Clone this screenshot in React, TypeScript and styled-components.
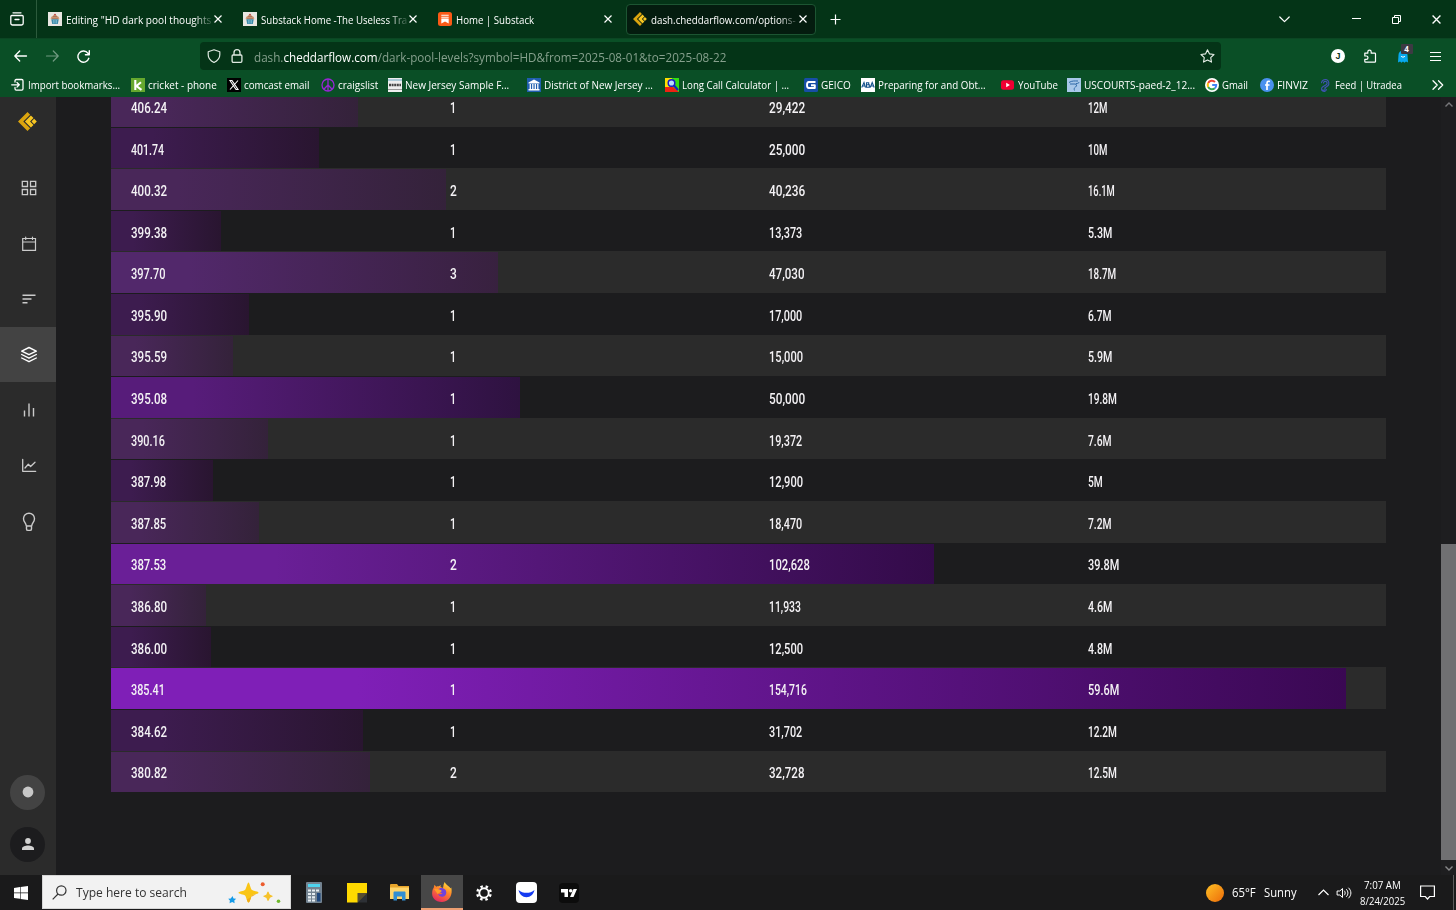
import React, { useLayoutEffect, useRef, useState } from "react";
import styled, { createGlobalStyle } from "styled-components";

const Global = createGlobalStyle`
  * { box-sizing: border-box; }
  html, body { margin: 0; padding: 0; background: #1c1c1e; overflow: hidden; }
  body { font-family: "Open Sans", "Noto Sans", sans-serif; color: #fff; }
  svg { display: block; flex: none; overflow: visible; }
`;

/* Text condensed or widened to a given width */
const FitBox = styled.span<{ $w: number }>`
  display: block;
  flex: none;
  width: ${(p) => p.$w}px;
  white-space: pre;
`;
const FitText = styled.span`
  display: inline-block;
  transform-origin: 0 50%;
`;
function Fit({ w, children }: { w: number; children: React.ReactNode }) {
  const ref = useRef<HTMLSpanElement>(null);
  const [scale, setScale] = useState(1);
  useLayoutEffect(() => {
    if (ref.current) setScale(w / ref.current.offsetWidth);
  }, [w]);
  return (
    <FitBox $w={w}>
      <FitText ref={ref} style={{ transform: `scaleX(${scale})` }}>{children}</FitText>
    </FitBox>
  );
}

const Screen = styled.div`
  width: 1456px;
  height: 910px;
  display: flex;
  flex-direction: column;
  overflow: hidden;
`;

/* ---------- tab strip ---------- */
const TabStrip = styled.div`
  height: 38px;
  background: #043417;
  display: flex;
  align-items: center;
  flex: none;
`;
const FirefoxView = styled.div`
  width: 37px;
  height: 38px;
  border-right: 1px solid #2c5a3c;
  display: flex;
  align-items: center;
  padding-left: 10px;
  margin-right: 4px;
`;
const Tab = styled.div<{ $active?: boolean }>`
  width: 190px;
  height: 31px;
  margin-right: 5px;
  border-radius: 4px;
  display: flex;
  align-items: center;
  padding-left: 6px;
  border: 1px solid ${(p) => (p.$active ? "#1c5532" : "transparent")};
  background: ${(p) => (p.$active ? "#041c0f" : "transparent")};
  font-size: 11.2px;
`;
const TabTitle = styled.div<{ $fade?: boolean }>`
  width: 146px;
  margin-left: 3.5px;
  line-height: 20px;
  padding-top: 1px;
  ${(p) => p.$fade && "mask-image: linear-gradient(90deg, #000 128px, rgba(0,0,0,.2) 145px);"}
`;
const CloseBox = styled.span`
  width: 14px;
  display: flex;
  justify-content: center;
  margin-left: -0.5px;
`;
const WindowButtons = styled.div`
  display: flex;
  margin-left: auto;
`;
const WinButton = styled.div<{ $w: number }>`
  width: ${(p) => p.$w}px;
  height: 38px;
  display: flex;
  align-items: center;
  justify-content: center;
`;

/* ---------- navigation bar ---------- */
const NavBar = styled.div`
  height: 35px;
  background: #0a4f26;
  border-top: 1px solid #0b4623;
  display: flex;
  align-items: center;
  flex: none;
`;
const NavButton = styled.div<{ $w: number; $dim?: boolean }>`
  width: ${(p) => p.$w}px;
  display: flex;
  justify-content: center;
  opacity: ${(p) => (p.$dim ? 0.42 : 1)};
`;
const NavLeft = styled.div`
  display: flex;
  width: 200px;
  padding-left: 4.5px;
`;
const AddressBar = styled.div`
  width: 1021px;
  height: 28px;
  border-radius: 4px;
  background: #043417;
  display: flex;
  align-items: center;
  padding-left: 7px;
  font-size: 11.9px;
  color: #86a08d;
  gap: 9.3px;
  line-height: 18px;
`;
const Address = styled.div`
  padding-top: 1px;
`;
const Host = styled.span`
  color: #fff;
`;
const StarSlot = styled.div`
  margin: 0 6px 0 auto;
`;
const Extensions = styled.div`
  display: flex;
  align-items: center;
  margin-left: auto;
  padding-right: 5px;
`;
const Avatar = styled.div`
  width: 14px;
  height: 14px;
  border-radius: 50%;
  background: #fff;
  color: #0b3219;
  font: 700 9px/14px "Liberation Sans", sans-serif;
  text-align: center;
`;
const GhostWrap = styled.div`
  position: relative;
`;
const Count = styled.span`
  position: absolute;
  left: 4px;
  top: -6px;
  width: 12px;
  height: 10px;
  border-radius: 1px;
  background: #3d3a43;
  font-size: 8px;
  font-weight: 700;
  line-height: 10px;
  text-align: center;
`;

/* ---------- bookmarks ---------- */
const Bookmarks = styled.div`
  height: 24px;
  background: #0a4f26;
  display: flex;
  align-items: center;
  padding-left: 10.5px;
  flex: none;
  font-size: 10.7px;
  line-height: 18px;
`;
const Bookmark = styled.div<{ $slot: number }>`
  width: ${(p) => p.$slot}px;
  display: flex;
  align-items: center;
  gap: 3px;
  flex: none;
`;

/* ---------- page ---------- */
const Page = styled.div`
  height: 778px;
  display: flex;
  background: #1c1c1e;
  flex: none;
`;
const Sidebar = styled.nav`
  width: 55.5px;
  background: #2b2b2b;
  display: flex;
  flex-direction: column;
  align-items: center;
  padding-bottom: 13.5px;
`;
const LogoSlot = styled.div`
  height: 63px;
  padding-top: 15px;
`;
const SideItem = styled.div<{ $active?: boolean }>`
  width: 100%;
  height: 55.55px;
  display: flex;
  align-items: center;
  justify-content: center;
  padding: 1px 0 0 2px;
  color: ${(p) => (p.$active ? "#fff" : "#cbcbcb")};
  background: ${(p) => (p.$active ? "#434343" : "transparent")};
`;
const Round = styled.div<{ $bg: string }>`
  width: 35px;
  height: 35px;
  border-radius: 50%;
  background: ${(p) => p.$bg};
  display: flex;
  align-items: center;
  justify-content: center;
`;
const Bottom = styled.div`
  margin-top: auto;
  display: flex;
  flex-direction: column;
  gap: 17px;
`;
const Main = styled.main`
  width: 1385.5px;
  padding-left: 55.5px;
  overflow: hidden;
`;
const Table = styled.div`
  width: 1275px;
  margin-top: -11.9px;
`;
const Row = styled.div<{ $light: boolean }>`
  height: 41.6px;
  background: ${(p) => (p.$light ? "#2b2b2b" : "#1c1c1e")};
  display: grid;
  grid-template-columns: 100%;
  padding-top: 1px;
`;
const Bar = styled.div<{ $from: string; $to: string }>`
  grid-area: 1 / 1;
  height: 40.6px;
  background: linear-gradient(90deg, ${(p) => p.$from} 20%, ${(p) => p.$to});
`;
const Cells = styled.div`
  grid-area: 1 / 1;
  display: grid;
  grid-template-columns: repeat(4, 318.9px);
  align-items: center;
  padding: 3px 0 0 20px;
  font: 500 14.3px/20px Roboto, sans-serif;
  color: #f4f2f5;
  z-index: 1;
`;
const Scroll = styled.div`
  width: 15px;
  background: #1e1e20;
  display: flex;
  flex-direction: column;
  align-items: center;
  justify-content: space-between;
  padding: 5px 0 4px;
`;
const Thumb = styled.div`
  width: 15px;
  height: 316px;
  margin: 431px 0 0;
  background: #707072;
`;

/* ---------- taskbar ---------- */
const Taskbar = styled.div`
  height: 35px;
  background: #1a1a1b;
  display: flex;
  flex: none;
`;
const TaskSlot = styled.div<{ $w: number; $active?: boolean }>`
  width: ${(p) => p.$w}px;
  height: 35px;
  display: flex;
  align-items: center;
  justify-content: center;
  background: ${(p) => (p.$active ? "#474747" : "transparent")};
  border-bottom: ${(p) => (p.$active ? "2px solid #ee9f72" : "0")};
`;
const Search = styled.div`
  width: 249px;
  height: 34px;
  background: #f2f2f2;
  border: 1px solid #d6d6d6;
  color: #333;
  display: flex;
  align-items: center;
  padding: 1px 9px 0 9px;
  gap: 9px;
  font-size: 12.6px;
  line-height: 20px;
`;
const SearchLabel = styled.div`
  padding-top: 1px;
`;
const Sparkles = styled.div`
  margin-left: auto;
`;
const Tray = styled.div`
  display: flex;
  align-items: center;
  margin-left: auto;
  font-size: 12.3px;
  line-height: 18px;
`;
const Gap = styled.div<{ $w: number }>`
  width: ${(p) => p.$w}px;
  flex: none;
`;
const Clock = styled.div`
  width: 46px;
  display: flex;
  flex-direction: column;
  align-items: center;
  font-size: 10.8px;
  line-height: 15.5px;
`;
const Edge = styled.div`
  width: 1px;
  height: 35px;
  background: #5b5b5b;
  margin-right: 2px;
`;

const Cupcake = () => (
  <svg width="14" height="14" viewBox="0 0 14 14">
    <path fill="#e9e7e2" d="M0 0h14v14H0z" />
    <path fill="#d39a76" d="M2.800 7.300c-.4-1.500.6-3 2.200-3.500C5.500 2.400 8 2 8.700 3.700c1.600.4 3 2 2.500 3.600z" />
    <path fill="#3b89a8" d="M3.300 7.300h7.400L9.800 12H4.200z" />
    <path stroke="#85c3d6" strokeWidth=".7" d="M5.600 8v3.500M7 8v3.500M8.500 8v3.500" />
    <path stroke="#8b604f" strokeWidth=".6" d="M4 6.300h6M5 4.500h4" />
    <circle cx="7" cy="2.600" r=".9" fill="#b83d3d" />
  </svg>
);
const SubstackIcon = () => (
  <svg width="14" height="14" viewBox="0 0 14 14">
    <rect width="14" height="14" rx="2.500" fill="#fb5a16" />
    <path fill="#fff" d="M3.300 2.800h7.400v1H3.300zM3.300 4.700h7.400v1H3.300zM3.300 6.500h7.400v5L7 9.500l-3.700 2z" />
  </svg>
);
const Cheddar = ({ s }: { s: number }) => (
  <svg width={s} height={s} viewBox="0 0 20 20">
    <path fill="#dba40e" d="M10 0l2.800 2.800L5.600 10l7.200 7.200L10 20 0 10z" />
    <path fill="#f7c622" d="M13.600 3.700l2.700 2.700-3.600 3.600 3.600 3.600-2.700 2.700L7.300 10zM17 7.200l2.800 2.800-2.800 2.800-2.800-2.800z" />
  </svg>
);
const Close = ({ s = 7, c = "#fff" }: { s?: number; c?: string }) => (
  <svg width={s} height={s} viewBox="0 0 8 8">
    <path d="M.5.5l7 7M7.500.5l-7 7" stroke={c} strokeWidth="1.200" />
  </svg>
);
const line = { fill: "none", stroke: "currentColor", strokeLinecap: "round", strokeLinejoin: "round" } as const;

const tabs = [
  { t: 'Editing "HD dark pool thoughts', w: 145, icon: <Cupcake />, fade: true },
  { t: "Substack Home -The Useless Tra", w: 146, icon: <Cupcake />, fade: true },
  { t: "Home | Substack", w: 78, icon: <SubstackIcon /> },
  { t: "dash.cheddarflow.com/options-", w: 145, icon: <Cheddar s={14} />, active: true, fade: true },
];

const I = ({ children }: { children: React.ReactNode }) => (
  <svg width="14" height="14" viewBox="0 0 14 14">{children}</svg>
);
const bookmarks: [string, number, number, React.ReactNode][] = [
  ["Import bookmarks...", 92, 120, <I><path {...line} strokeWidth="1.300" d="M4 4V2.800C4 2 4.500 1.500 5.300 1.500h5.400c.8 0 1.300.5 1.300 1.300v8c0 .8-.5 1.300-1.300 1.300H5.300C4.500 12.100 4 11.600 4 10.800V9.500M.7 6.800h7.600M6 4.500l2.300 2.300L6 9.100" /></I>],
  ["cricket - phone", 69, 96, <I><path fill="#66a82e" d="M0 0h14v14H0z" /><path stroke="#fff" fill="none" strokeWidth="2.100" d="M4.300 2v10M10 4.300L5.500 8l5 3.800" /></I>],
  ["comcast email", 65, 94, <I><path fill="#000" d="M0 0h14v14H0z" /><path stroke="#fff" fill="none" strokeWidth="1.100" d="M3 2.500h2L11 11.500H9zM11 2.500L3 11.500" /></I>],
  ["craigslist", 40, 67, <I><circle cx="7" cy="7" r="6" stroke="#9826d5" strokeWidth="1.300" fill="none" /><path stroke="#9826d5" strokeWidth="1.300" fill="none" d="M7 1v12M7 7l-4.200 4.200M7 7l4.200 4.200" /></I>],
  ["New Jersey Sample F...", 104, 139, <I><path fill="#eee" d="M0 0h14v14H0z" /><path fill="#6aa9c5" d="M0 1.500h14v1H0z" /><path stroke="#444" strokeWidth="2.500" strokeDasharray="2 .6" d="M1 7h12" /><path stroke="#999" d="M0 11.500h14" /></I>],
  ["District of New Jersey ...", 109, 138, <I><path fill="#205eae" d="M0 0h14v14H0z" /><path fill="#fff" d="M7 1.500l5.500 3v1h-11v-1zM1.500 11h11v1.500h-11z" /><path stroke="#fff" strokeWidth="1.300" d="M3.300 6v5M5.800 6v5M8.300 6v5M10.800 6v5" /></I>],
  ["Long Call Calculator | ...", 107, 139, <I><path fill="#32df12" d="M0 0h14v14H0z" /><path fill="#ffe000" d="M0 0h7l-3 9H0z" /><path fill="#ed2213" d="M0 9h8l6 5H0z" /><circle cx="6.500" cy="5" r="3.300" fill="#b6dcff" stroke="#1919c8" strokeWidth="1.500" /><path stroke="#1919c8" strokeWidth="2" d="M9 7.500l4 4.500" /></I>],
  ["GEICO", 30, 57, <I><rect width="14" height="14" rx="1.500" fill="#174ea6" /><path fill="none" stroke="#fff" strokeWidth="1.900" strokeLinejoin="round" d="M11.500 4H4.800C3.300 4 3 5 3 7s.3 3 1.800 3h6V7.300H7" /></I>],
  ["Preparing for and Obt...", 108, 140, <I><path fill="#fff" d="M0 0h14v14H0z" /><path fill="none" stroke="#12518b" strokeWidth="1.100" d="M.7 9.500L3 4.500l1.500 5M1.500 8h3M5.500 4.700h2.200v2H5.800h2.500v2.500H5.500zM9.200 9.500l2-5 2 5M10 8h3" /></I>],
  ["YouTube", 40, 66, <I><rect y="2.200" width="13" height="9.600" rx="2.500" fill="#f00033" /><path fill="#fff" d="M5.200 4.800v4.400L8.900 7z" /></I>],
  ["USCOURTS-paed-2_12...", 111, 138, <I><path fill="#a8c8e9" d="M0 0h14v14H0z" /><path fill="none" stroke="#2e69a8" strokeWidth="1" d="M2 4.500c3-2 6-1.500 9-1.500M3 6h5c2 0 2 2 .5 3S7 11 7.500 12.500M9 5.500c2 0 3-.5 3-1.500" /></I>],
  ["Gmail", 26, 55, <I><circle cx="7" cy="7" r="7" fill="#fff" /><g fill="none" strokeWidth="2"><path stroke="#ea4335" d="M3.200 5A4.300 4.300 0 0 1 10 4" /><path stroke="#fbbc05" d="M3.200 5a4.300 4.300 0 0 0 0 4" /><path stroke="#34a853" d="M3.200 9A4.300 4.300 0 0 0 9.800 10.300" /><path stroke="#4285f4" d="M7.200 7h4a4.300 4.300 0 0 1-1.400 3.300" /></g></I>],
  ["FINVIZ", 31, 58, <I><circle cx="7" cy="7" r="7" fill="#4a91ee" /><path fill="none" stroke="#fff" strokeWidth="1.700" d="M10 3.500C8 2.800 7 3.500 7 5.500V12M5 7h4.500" /></I>],
  ["Feed | Utradea", 67, 110, <I><g {...line} stroke="#4053b4" strokeWidth="1.100"><path d="M3.500 4.800a3.700 3.700 0 1 1 6.300 3L6.800 10a1.300 1.300 0 0 1-1.900 1.800M5.500 5a1.800 1.800 0 1 1 3 1.500L4.500 9a2.500 2.500 0 1 0 4 2.500" /></g></I>],
];

const TIER = {
  dark: ["#3d1c4f", "#291530"],
  light: ["#492759", "#34223a"],
  mid: ["#52286b", "#38213f"],
  strong: ["#571c7a", "#2e1240"],
  high: ["#6a1f97", "#330b49"],
  top: ["#7f1fb7", "#3a0853"],
};
const rows: [string, string, string, string, number, keyof typeof TIER][] = [
  ["406.24", "1", "29,422", "12M", 247, "light"],
  ["401.74", "1", "25,000", "10M", 208, "dark"],
  ["400.32", "2", "40,236", "16.1M", 335, "light"],
  ["399.38", "1", "13,373", "5.3M", 110, "dark"],
  ["397.70", "3", "47,030", "18.7M", 387, "mid"],
  ["395.90", "1", "17,000", "6.7M", 138, "dark"],
  ["395.59", "1", "15,000", "5.9M", 122, "light"],
  ["395.08", "1", "50,000", "19.8M", 409, "strong"],
  ["390.16", "1", "19,372", "7.6M", 157, "light"],
  ["387.98", "1", "12,900", "5M", 102, "dark"],
  ["387.85", "1", "18,470", "7.2M", 148, "light"],
  ["387.53", "2", "102,628", "39.8M", 823, "high"],
  ["386.80", "1", "11,933", "4.6M", 95, "light"],
  ["386.00", "1", "12,500", "4.8M", 100, "dark"],
  ["385.41", "1", "154,716", "59.6M", 1235, "top"],
  ["384.62", "1", "31,702", "12.2M", 252, "dark"],
  ["380.82", "2", "32,728", "12.5M", 259, "light"],
];
const advance: Record<string, number> = { "1": 4.5, "7": 5.9, ".": 2.9, ",": 2.9, M: 8.3 };
const textWidth = (s: string) => (s === "1" ? 6 : [...s].reduce((n, c) => n + (advance[c] ?? 6.7), 0));

const sideIcons = [
  <svg width="16" height="16" viewBox="0 0 16 16"><path {...line} strokeLinejoin="miter" strokeWidth="1.300" d="M1.300 1.300h5.200v5.200H1.300zM9.500 1.300h5.200v5.200H9.500zM1.300 9.500h5.200v5.200H1.300zM9.500 9.500h5.200v5.200H9.500z" /></svg>,
  <svg width="16" height="16" viewBox="0 0 16 16"><path {...line} strokeLinejoin="miter" strokeWidth="1.200" d="M1.700 2.500h12.800v11.800H1.700zM1.700 6h12.800M4.700 1v2.500M11.500 1v2.500" /></svg>,
  <svg width="16" height="16" viewBox="0 0 16 16"><path stroke="currentColor" strokeWidth="1.400" d="M1.500 4.300h13M1.500 8h9M1.500 11.700h5" /></svg>,
  <svg width="18" height="18" viewBox="0 0 18 18"><path {...line} strokeWidth="1.400" d="M9 1.500l7.300 3.600L9 8.700 1.700 5.100zM1.700 8.500L9 12.200l7.300-3.700M1.700 12L9 15.700l7.300-3.700" /></svg>,
  <svg width="16" height="16" viewBox="0 0 16 16"><path stroke="currentColor" strokeWidth="1.400" d="M3.500 8.500v6M8 1.500v13M12.500 6v8.500" /></svg>,
  <svg width="16" height="16" viewBox="0 0 16 16"><path {...line} strokeWidth="1.300" d="M1.700 1.500v11.800h13M4 10l3.300-3.700 2.300 2.200L14 4.300" /></svg>,
  <svg width="18" height="20" viewBox="0 0 18 20"><path {...line} strokeWidth="1.400" d="M6.300 14c0-2.800-2.800-4-2.800-7.300a5.500 5.500 0 0 1 11 0c0 3.300-2.800 4.500-2.800 7.300zM6.500 14v2.900c0 1 .7 1.500 1.500 1.500h2c.8 0 1.500-.5 1.500-1.500V14" /></svg>,
];

export default function App() {
  return (
    <Screen>
      <Global />
      <TabStrip>
        <FirefoxView>
          <svg width="14" height="14" viewBox="0 0 14 14"><path {...line} strokeWidth="1.300" d="M3 .8h8M1.800 3.500h10.400c.6 0 1 .4 1 1v6.800c0 1-.8 1.700-1.700 1.700h-9c-.9 0-1.700-.7-1.700-1.700V4.500c0-.6.400-1 1-1zM5 7.500h4" /></svg>
        </FirefoxView>
        {tabs.map((t) => (
          <Tab key={t.t} $active={t.active}>
            {t.icon}
            <TabTitle $fade={t.fade}><Fit w={t.w}>{t.t}</Fit></TabTitle>
            <CloseBox><Close s={8} /></CloseBox>
          </Tab>
        ))}
        <WinButton $w={29}>
          <svg width="11" height="11" viewBox="0 0 11 11"><path d="M5.500.5v10M.5 5.500h10" stroke="#fff" strokeWidth="1.200" /></svg>
        </WinButton>
        <WindowButtons>
          <WinButton $w={40}><svg width="11" height="7" viewBox="0 0 11 7"><path {...line} strokeWidth="1.200" d="M.8 1l4.700 4.700L10.200 1" /></svg></WinButton>
          <WinButton $w={32} />
          <WinButton $w={40}><svg width="9" height="2" viewBox="0 0 9 2"><path fill="#fff" d="M0 0h9v1H0z" /></svg></WinButton>
          <WinButton $w={40}><svg width="9" height="9" viewBox="0 0 9 9"><path fill="none" stroke="#fff" d="M.5 2.500h6v6h-6zM2.500 2V.5h6v6H7" /></svg></WinButton>
          <WinButton $w={40}><Close s={9} /></WinButton>
        </WindowButtons>
      </TabStrip>

      <NavBar>
        <NavLeft>
          <NavButton $w={32}><svg width="13" height="12" viewBox="0 0 13 12"><path {...line} strokeWidth="1.300" d="M12.500 6H.8M5.700 1L.8 6l4.900 5" /></svg></NavButton>
          <NavButton $w={31} $dim><svg width="13" height="12" viewBox="0 0 13 12"><path {...line} strokeWidth="1.200" d="M.5 6h11.700M7.300 1l4.900 5-4.900 5" /></svg></NavButton>
          <NavButton $w={31}><svg width="13" height="13" viewBox="0 0 13 13"><path {...line} strokeWidth="1.400" d="M11.800 8.300A5.600 5.600 0 1 1 11 3.300L12.200 4.500M12.300.8v4H8.400" /></svg></NavButton>
        </NavLeft>
        <AddressBar>
          <svg width="14" height="14" viewBox="0 0 14 14"><path fill="none" stroke="#dfe9e1" strokeWidth="1.200" strokeLinejoin="round" d="M7 .7l5.800 2v3C12.800 9.500 10 12 7 13.500 4 12 1.200 9.500 1.200 5.700v-3z" /></svg>
          <svg width="14" height="14" viewBox="0 0 14 14"><path fill="none" stroke="#dfe9e1" strokeWidth="1.300" d="M4 6V3.700C4 1.900 5.200.6 7 .6s3 1.300 3 3.100V6M3 6h8c.5 0 .9.400.9.900v5.200c0 .7-.5 1.200-1.200 1.200H3.300c-.7 0-1.200-.5-1.200-1.200V6.900c0-.5.4-.9.9-.9z" /></svg>
          <Address>
            <Fit w={472}>dash.<Host>cheddarflow.com</Host>/dark-pool-levels?symbol=HD&amp;from=2025-08-01&amp;to=2025-08-22</Fit>
          </Address>
          <StarSlot><svg width="15" height="14" viewBox="0 0 15 14"><path {...line} strokeWidth="1.100" d="M7.500.8l2 4.100 4.500.6-3.300 3.100.8 4.500-4-2.200-4 2.200.8-4.500L1 5.500l4.500-.6z" color="#e8efe9" /></svg></StarSlot>
        </AddressBar>
        <Extensions>
          <NavButton $w={32}><Avatar>J</Avatar></NavButton>
          <NavButton $w={32}><svg width="14" height="14" viewBox="0 0 14 14"><path {...line} strokeWidth="1.200" d="M1.800 4.200h3V2.900a1.700 1.700 0 0 1 3.400 0v1.300h3.500c.5 0 .8.3.8.8v7.400c0 .5-.3.800-.8.800H2.600c-.5 0-.8-.3-.8-.8v-2h1.500a1.700 1.700 0 0 0 0-3.400H1.800z" /></svg></NavButton>
          <NavButton $w={33}>
            <GhostWrap>
              <svg width="12" height="13" viewBox="0 0 12 13"><path fill="#08a9ee" d="M1.500 5a4.500 4.500 0 0 1 9 0l.5 7.500-2-1-1.500 1.200-1.500-1.200-1.500 1.200-1.500-1.200-2 1z" /><path stroke="#fff" fill="none" d="M4 6c.8 1.500 3.200 1.500 4 0" /></svg>
              <Count>4</Count>
            </GhostWrap>
          </NavButton>
          <NavButton $w={32}><svg width="11" height="9" viewBox="0 0 11 9"><path stroke="#fff" strokeWidth="1.100" d="M0 .5h11M0 4.500h11M0 8.500h11" /></svg></NavButton>
        </Extensions>
      </NavBar>

      <Bookmarks>
        {bookmarks.map(([t, w, slot, icon]) => (
          <Bookmark key={t} $slot={slot}>{icon}<Fit w={w}>{t}</Fit></Bookmark>
        ))}
        <Gap $w={4.5} />
        <svg width="12" height="10" viewBox="0 0 12 10"><path {...line} strokeWidth="1.300" d="M1 .8L5.200 5 1 9.200M6.500.8L10.700 5 6.500 9.200" /></svg>
      </Bookmarks>

      <Page>
        <Sidebar>
          <LogoSlot><Cheddar s={19} /></LogoSlot>
          {sideIcons.map((icon, i) => <SideItem key={i} $active={i === 3}>{icon}</SideItem>)}
          <Bottom>
            <Round $bg="#434343"><svg width="12" height="12"><circle cx="6" cy="6" r="5.400" fill="#c8c8c8" /></svg></Round>
            <Round $bg="#1c1c1e"><svg width="12" height="12" viewBox="0 0 12 12"><circle cx="6" cy="3" r="2.900" fill="#d2d2d2" /><path fill="#d2d2d2" d="M0 12v-1.500C0 8.500 3.500 7.500 6 7.500s6 1 6 3V12z" /></svg></Round>
          </Bottom>
        </Sidebar>
        <Main>
          <Table>
            {rows.map(([level, trades, shares, value, bar, tier], i) => (
              <Row key={level} $light={i % 2 === 0}>
                <Bar $from={TIER[tier][0]} $to={TIER[tier][1]} style={{ width: bar }} />
                <Cells>
                  {[level, trades, shares, value].map((v, n) => <Fit key={n} w={textWidth(v)}>{v}</Fit>)}
                </Cells>
              </Row>
            ))}
          </Table>
        </Main>
        <Scroll>
          <svg width="8" height="5" viewBox="0 0 8 5"><path d="M.5 4.500L4 1l3.500 3.500" fill="none" stroke="#77777a" strokeWidth="1.400" /></svg>
          <Thumb />
          <svg width="8" height="5" viewBox="0 0 8 5"><path d="M.5.5L4 4 7.500.5" fill="none" stroke="#88888a" strokeWidth="1.400" /></svg>
        </Scroll>
      </Page>

      <Taskbar>
        <TaskSlot $w={42}><svg width="14" height="14" viewBox="0 0 14 14"><path fill="#fff" d="M0 2l6-.9v5.500H0zM6.600 1L14 0v6.600H6.600zM0 7.200h6v5.600l-6-.9zM6.600 7.200H14V14l-7.400-1z" /></svg></TaskSlot>
        <Search>
          <svg width="15" height="15" viewBox="0 0 15 15"><circle cx="9.300" cy="5.500" r="4.700" fill="none" stroke="#333" strokeWidth="1.200" /><path stroke="#333" strokeWidth="1.200" d="M6 9l-5.300 5.300" /></svg>
          <SearchLabel><Fit w={111}>Type here to search</Fit></SearchLabel>
          <Sparkles>
            <svg width="53" height="22" viewBox="0 0 53 22">
              <path fill="#fac515" d="M20.500.5c1 0 2.200 6.500 3.500 7.500s6.500 1.500 6.500 2.700-5.500 1.600-6.500 2.700-2.200 7.100-3.500 7.100-2.300-6.100-3.500-7.100-6.500-1.600-6.500-2.700 5.500-1.700 6.500-2.700S19.500.5 20.500.5z" />
              <path fill="#f0ab16" d="M30.500 10.700c0 1.200-5.500 1.600-6.500 2.700s-2.200 7.100-3.500 7.100c-.6 0-1.200-1.400-1.700-3z" />
              <path fill="#f6c22b" d="M40 9.500c1 0 1.100 2.800 2 3.300s2.700.7 2.700 1.500-2.200.9-2.700 1.500-1 3.200-2 3.200-1-2.700-1.800-3.200-2.900-.7-2.900-1.500 2.200-1 2.900-1.500S39 9.500 40 9.500z" />
              <path fill="#159be8" d="M4.500 14l1 2.500 2.700.2-1.900 1.900.3 2.700-2.400-1.200-2.600 1.200.3-2.700L.2 16.700l2.600-.3z" />
              <circle cx="34.700" cy="2.200" r="2" fill="#ec5c2e" /><circle cx="50.500" cy="19.300" r="1.800" fill="#6fb92c" />
            </svg>
          </Sparkles>
        </Search>
        <Gap $w={2} />
        <TaskSlot $w={42.5}>
          <svg width="16" height="21" viewBox="0 0 16 21"><rect width="16" height="21" rx="1" fill="#738391" /><path fill="#4ed3ef" d="M2 2h12v3H2z" /><path stroke="#e6edf2" strokeWidth="2.200" strokeDasharray="3 1" d="M2 8.500h12M2 12h8M2 15.400h8M2 18.500h8" /><path fill="#1e477d" d="M11 11h3.500v8.500H11z" /></svg>
        </TaskSlot>
        <TaskSlot $w={42.5}>
          <svg width="20" height="20" viewBox="0 0 20 20"><path fill="#ffd900" d="M0 0h20v10l-9.500 9.500H0z" /><path fill="#574d30" d="M20 10L10.500 19.500V10z" /><path fill="#2d3035" d="M20 10v9.500h-9.500z" /></svg>
        </TaskSlot>
        <TaskSlot $w={42.5}>
          <svg width="19" height="17" viewBox="0 0 19 17"><path fill="#e8a52b" d="M0 1.300C0 .5.500 0 1.300 0H7l1.500 2H19v5H0z" /><path fill="#ffd56a" d="M0 3.500h19V15H0z" /><path fill="#318ed2" d="M3.500 8.500C3.500 8 4 7.500 4.500 7.500h10c.6 0 1 .4 1 1V16.500H12v-4H7v4H3.500z" /></svg>
        </TaskSlot>
        <TaskSlot $w={42.5} $active>
          <svg width="20" height="20" viewBox="0 0 20 20"><defs><linearGradient id="fox" x1=".8" y1="0" x2=".3" y2="1"><stop stopColor="#ffe23d" /><stop offset=".45" stopColor="#ff8429" /><stop offset="1" stopColor="#e62761" /></linearGradient></defs><path fill="url(#fox)" d="M2.500 2.700l1.700 2C5 4.300 6 4.200 7 4.300L8.700 3l-.2 2L11 6l.7-3.700L12.700 0c.5 2 4 4 5 5.300.8 1 1.300 1.300 1.500 0C21 12 18 20 10 20 3 20-.5 15.500.2 10c.2-2.500 1-3.500 1.500-4.300z" /><path fill="#7142dc" d="M6 8c1-1.700 3-2.300 5-1.700 2 .6 3.300 2.200 3.300 4.200A4.300 4.300 0 0 1 6 12c1.500.8 3.500.5 4.500-.7-2 0-2-1.800-4.500-1.500z" /><path fill="#ff9e28" d="M2 7c2-.8 5 0 6.500 1L10 9l-2.300 1.400-2 1.500z" /></svg>
        </TaskSlot>
        <TaskSlot $w={42}>
          <svg width="16" height="16" viewBox="0 0 16 16"><circle cx="8" cy="8" r="4.700" fill="none" stroke="#fff" strokeWidth="1.900" /><circle cx="8" cy="8" r="6.700" fill="none" stroke="#fff" strokeWidth="2.400" strokeDasharray="2.500 2.762" strokeDashoffset="-1.400" /></svg>
        </TaskSlot>
        <TaskSlot $w={42.5}>
          <svg width="21" height="21" viewBox="0 0 21 21"><rect width="21" height="21" rx="4" fill="#fff" /><path fill="#153bf1" d="M2.500 8c4.500 3.800 11.500 3.800 16 0-1 4.500-4 7.200-8 7.200s-7-2.700-8-7.200z" /></svg>
        </TaskSlot>
        <TaskSlot $w={42.5}>
          <svg width="20" height="20" viewBox="0 0 20 20"><rect width="20" height="20" rx="4" fill="#0c0c0c" /><path fill="#fff" d="M2 6h7v8H5.500V9.500H2zM14.500 6H18l-3.500 8H11z" /><circle cx="11.700" cy="7.800" r="1.800" fill="#fff" /></svg>
        </TaskSlot>
        <Tray>
          <svg width="18" height="18" viewBox="0 0 18 18"><defs><linearGradient id="sun" x1="0" y1="0" x2="1" y2="1"><stop stopColor="#ffc125" /><stop offset="1" stopColor="#ed6b09" /></linearGradient></defs><circle cx="9" cy="9" r="9" fill="url(#sun)" /></svg>
          <Gap $w={8} /><Fit w={24}>65°F</Fit><Gap $w={8} /><Fit w={33}>Sunny</Fit><Gap $w={21} />
          <svg width="11" height="7" viewBox="0 0 11 7"><path fill="none" stroke="#fff" strokeWidth="1.200" d="M.5 6L5.500 1l5 5" /></svg>
          <Gap $w={8} />
          <svg width="15" height="12" viewBox="0 0 15 12"><path {...line} strokeWidth="1" d="M.5 4h2.300L5.500 1.500v9L2.800 8H.5zM7.500 4c1 1 1 3 0 4M9.500 2.500c2 2 2 5 0 7M11.700 1c3 3 3 7 0 10" /></svg>
          <Gap $w={7} />
          <Clock><Fit w={37}>7:07 AM</Fit><Fit w={45}>8/24/2025</Fit></Clock>
          <Gap $w={15} />
          <svg width="15" height="15" viewBox="0 0 15 15"><path fill="none" stroke="#fff" strokeWidth="1.200" d="M.6 1h13.800v10.500h-4.700L7.500 14l-2.200-2.500H.6z" /></svg>
          <Gap $w={18} />
          <Edge />
        </Tray>
      </Taskbar>
    </Screen>
  );
}
